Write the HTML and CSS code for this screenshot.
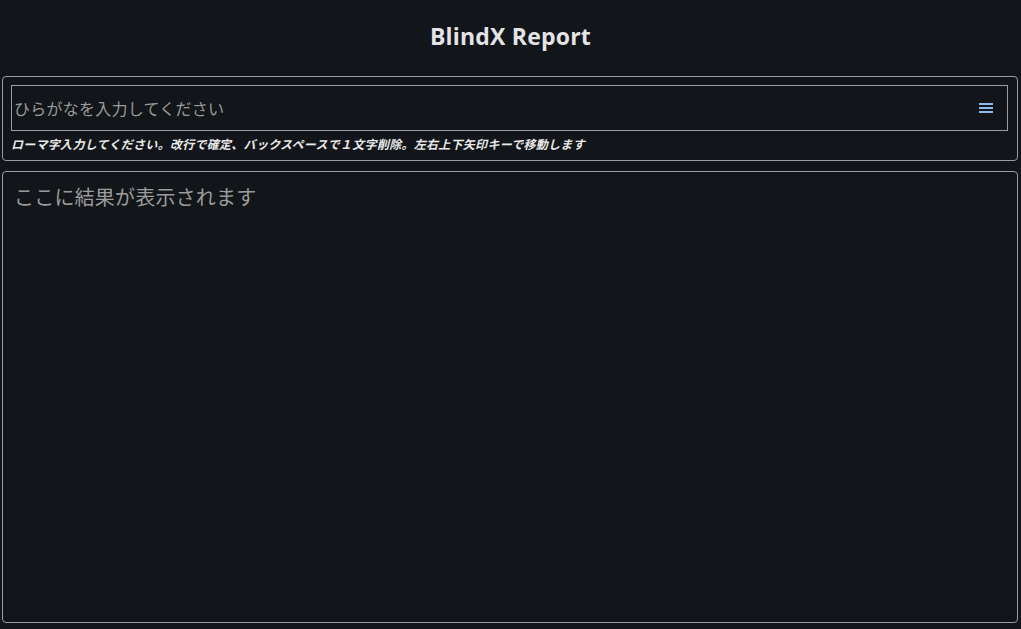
FILE: index.html
```html
<!DOCTYPE html>
<html lang="ja">
<head>
<meta charset="utf-8">
<title>BlindX Report</title>
<link rel="stylesheet" href="styles.css">
</head>
<body>
<header class="header">
  <h1 class="title">BlindX Report</h1>
</header>
<main class="main">
  <section class="panel input-panel">
    <div class="input-box">
      <span class="placeholder">ひらがなを入力してください</span>
      <button class="menu-btn" aria-label="menu">
        <svg width="14" height="12" viewBox="0 0 14 12"><rect x="0" y="1" width="14" height="2" fill="#8fb8ec"/><rect x="0" y="5" width="14" height="2" fill="#8fb8ec"/><rect x="0" y="9" width="14" height="2" fill="#8fb8ec"/></svg>
      </button>
    </div>
    <p class="hint">ローマ字入力してください。改行で確定、バックスペースで１文字削除。左右上下矢印キーで移動します</p>
  </section>
  <section class="panel result-panel">
    <p class="result-text">ここに結果が表示されます</p>
  </section>
</main>
</body>
</html>
```
FILE: styles.css
```css
* { box-sizing: border-box; }
html, body { margin: 0; padding: 0; }
body {
  background: #121519;
  color: #e6e6e8;
  font-family: "Noto Sans", "Noto Sans CJK JP", sans-serif;
  width: 1021px;
  height: 629px;
  overflow: hidden;
}
.header {
  height: 76px;
  display: flex;
  justify-content: center;
  padding-top: 19px;
}
.title {
  margin: 0;
  font-family: "Open Sans", "Noto Sans", sans-serif;
  font-weight: 700;
  font-size: 23px;
  line-height: 34px;
  color: #e4e4e7;
  letter-spacing: 0.2px;
}
.main {
  padding: 0 3px 0 2px;
  display: flex;
  flex-direction: column;
  gap: 10px;
}
.panel {
  border: 1px solid #9a9da2;
  border-radius: 4px;
}
.input-panel {
  padding: 8px 9px 8px 8px;
  height: 85px;
}
.input-box {
  height: 46px;
  border: 1px solid #9a9da2;
  display: flex;
  align-items: center;
  justify-content: space-between;
  padding: 0 14px 0 2px;
}
.placeholder {
  font-family: "Noto Sans CJK JP", sans-serif;
  font-size: 16px;
  letter-spacing: 0.25px;
  color: #9a9a9a;
}
.menu-btn {
  background: none;
  border: 0;
  padding: 0;
  display: flex;
}
.hint {
  margin: 5px 0 0 0;
  font-family: "Noto Sans CJK JP", sans-serif;
  font-size: 12px;
  font-style: italic;
  font-weight: 600;
  letter-spacing: 0.28px;
  line-height: 16px;
  color: #e8e8e8;
}
.result-panel {
  height: 452px;
  padding: 11px 11px;
}
.result-text {
  margin: 0;
  font-family: "Noto Sans CJK JP", sans-serif;
  font-size: 20px;
  letter-spacing: 0.2px;
  line-height: 28px;
  color: #9c9c9c;
}
```
